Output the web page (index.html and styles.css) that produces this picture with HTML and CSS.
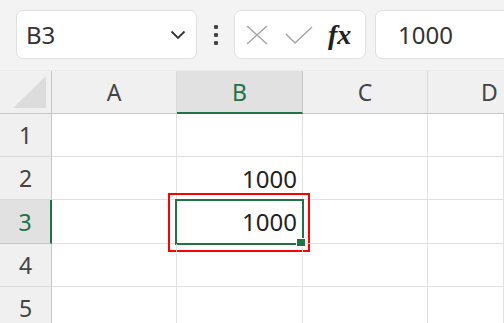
FILE: index.html
```html
<!DOCTYPE html>
<html lang="ja">
<head>
  <meta charset="UTF-8">
  <meta name="viewport" content="width=device-width, initial-scale=1.0">
  <title>Excel</title>
  <link rel="stylesheet" href="styles.css">
</head>
<body>
  <div class="barra">
    <div class="caixa-nome">
      <span>B3</span>
      <svg class="seta" viewBox="0 0 16 10" width="16" height="10">
        <path d="M1.5 1.5 L8 8 L14.5 1.5" stroke="#333" stroke-width="1.8" fill="none" />
      </svg>
    </div>
    <div class="pontos">
      <i></i><i></i><i></i>
    </div>
    <div class="caixa-fx">
      <svg viewBox="0 0 22 20" width="22" height="20">
        <path d="M1 1 L21 19 M21 1 L1 19" stroke="#a6a6a6" stroke-width="1.5" fill="none" />
      </svg>
      <svg viewBox="0 0 28 18" width="28" height="18">
        <path d="M1 8 L10 17 L27 1" stroke="#a6a6a6" stroke-width="1.5" fill="none" />
      </svg>
      <span class="fx">fx</span>
    </div>
    <div class="formula">1000</div>
  </div>

  <div class="planilha">
    <div class="canto"><div class="triangulo"></div></div>
    <div class="cab-col">A</div>
    <div class="cab-col ativo">B</div>
    <div class="cab-col">C</div>
    <div class="cab-col cortada">D</div>

    <div class="cab-lin">1</div>
    <div class="celula"></div><div class="celula"></div><div class="celula"></div><div class="celula"></div>

    <div class="cab-lin">2</div>
    <div class="celula"></div><div class="celula">1000</div><div class="celula"></div><div class="celula"></div>

    <div class="cab-lin ativo">3</div>
    <div class="celula"></div>
    <div class="celula selecionada">1000<span class="marca"></span></div>
    <div class="celula"></div><div class="celula"></div>

    <div class="cab-lin">4</div>
    <div class="celula"></div><div class="celula"></div><div class="celula"></div><div class="celula"></div>

    <div class="cab-lin">5</div>
    <div class="celula"></div><div class="celula"></div><div class="celula"></div><div class="celula"></div>
  </div>
</body>
</html>
```

FILE: styles.css
```css
body {
  margin: 0;
  width: 504px;
  height: 323px;
  overflow: hidden;
  background: #ffffff;
  font-family: 'Noto Sans', 'Liberation Sans', sans-serif;
  color: #333;
}

.barra {
  display: flex;
  align-items: flex-start;
  height: 71px;
  padding: 10px 0 0 16px;
  box-sizing: border-box;
  background: #f3f3f3;
  border-bottom: 1px solid #ebebeb;
  overflow: hidden;
}

.caixa-nome,
.caixa-fx,
.formula {
  height: 49px;
  box-sizing: border-box;
  background: #fff;
  border: 1px solid #e0e0e0;
  border-radius: 7px;
  display: flex;
  align-items: center;
  flex-shrink: 0;
}

.caixa-nome {
  width: 181px;
  padding: 0 10px 0 9px;
  justify-content: space-between;
  font-size: 24px;
}

.pontos {
  width: 37px;
  height: 49px;
  display: flex;
  flex-direction: column;
  align-items: center;
  justify-content: center;
  gap: 4px;
  flex-shrink: 0;
}

.pontos i {
  width: 4px;
  height: 4px;
  border-radius: 1px;
  background: #444;
}

.caixa-fx {
  width: 132px;
  padding: 0 8px 0 11px;
  gap: 17px;
}

.fx {
  font-family: 'Liberation Serif', 'DejaVu Serif', serif;
  font-style: italic;
  font-weight: bold;
  font-size: 28px;
  color: #222;
  margin-left: -2px;
}

.formula {
  flex: 1;
  flex-shrink: 1;
  margin-left: 9px;
  padding-left: 22px;
  border-right: none;
  border-radius: 7px 0 0 7px;
  font-size: 24px;
}

.planilha {
  display: grid;
  width: 504px;
  overflow: hidden;
  grid-template-columns: 52px 125px 126px 125px 76px;
  grid-template-rows: 43px 43px 43px 44px 43px 43px;
}

.canto {
  background: #f0f0f0;
  border-right: 1px solid #c6c6c6;
  border-bottom: 1px solid #c6c6c6;
  position: relative;
}

.triangulo {
  position: absolute;
  right: 5px;
  bottom: 5px;
  width: 33px;
  height: 32px;
  background: #dcdcdc;
  clip-path: polygon(100% 0, 100% 100%, 0 100%);
}

.cab-col,
.cab-lin {
  display: flex;
  align-items: center;
  justify-content: center;
  background: #f0f0f0;
  color: #444;
  font-size: 23px;
  box-sizing: border-box;
}

.cab-col {
  border-right: 1px solid #dadada;
  border-bottom: 1px solid #c6c6c6;
}

.cab-col.cortada {
  justify-content: flex-start;
  padding-left: 53px;
  border-right: none;
}

.cab-lin {
  border-right: 1px solid #c6c6c6;
  border-bottom: 1px solid #dadada;
}

.cab-col.ativo {
  background: #e1e1e1;
  color: #217346;
  border-bottom: 2px solid #217346;
  border-right-color: #c6c6c6;
}

.cab-lin.ativo {
  background: #e1e1e1;
  color: #217346;
  border-right: 2px solid #217346;
  border-bottom-color: #c6c6c6;
}

.celula {
  display: flex;
  align-items: center;
  justify-content: flex-end;
  padding-right: 5px;
  box-sizing: border-box;
  border-right: 1px solid #e1e1e1;
  border-bottom: 1px solid #e1e1e1;
  font-size: 24px;
  color: #222;
  position: relative;
}

.selecionada::before {
  content: "";
  position: absolute;
  top: -7px;
  left: -9px;
  width: 142px;
  height: 59px;
  box-sizing: border-box;
  border: 2px solid #ff0000;
}

.selecionada::after {
  content: "";
  position: absolute;
  top: -1px;
  left: -2px;
  right: -2px;
  bottom: -2px;
  border: 2px solid #217346;
}

.marca {
  position: absolute;
  right: -4px;
  bottom: -4px;
  width: 8px;
  height: 7px;
  background: #217346;
  border: 1px solid #fff;
  z-index: 1;
}
```
